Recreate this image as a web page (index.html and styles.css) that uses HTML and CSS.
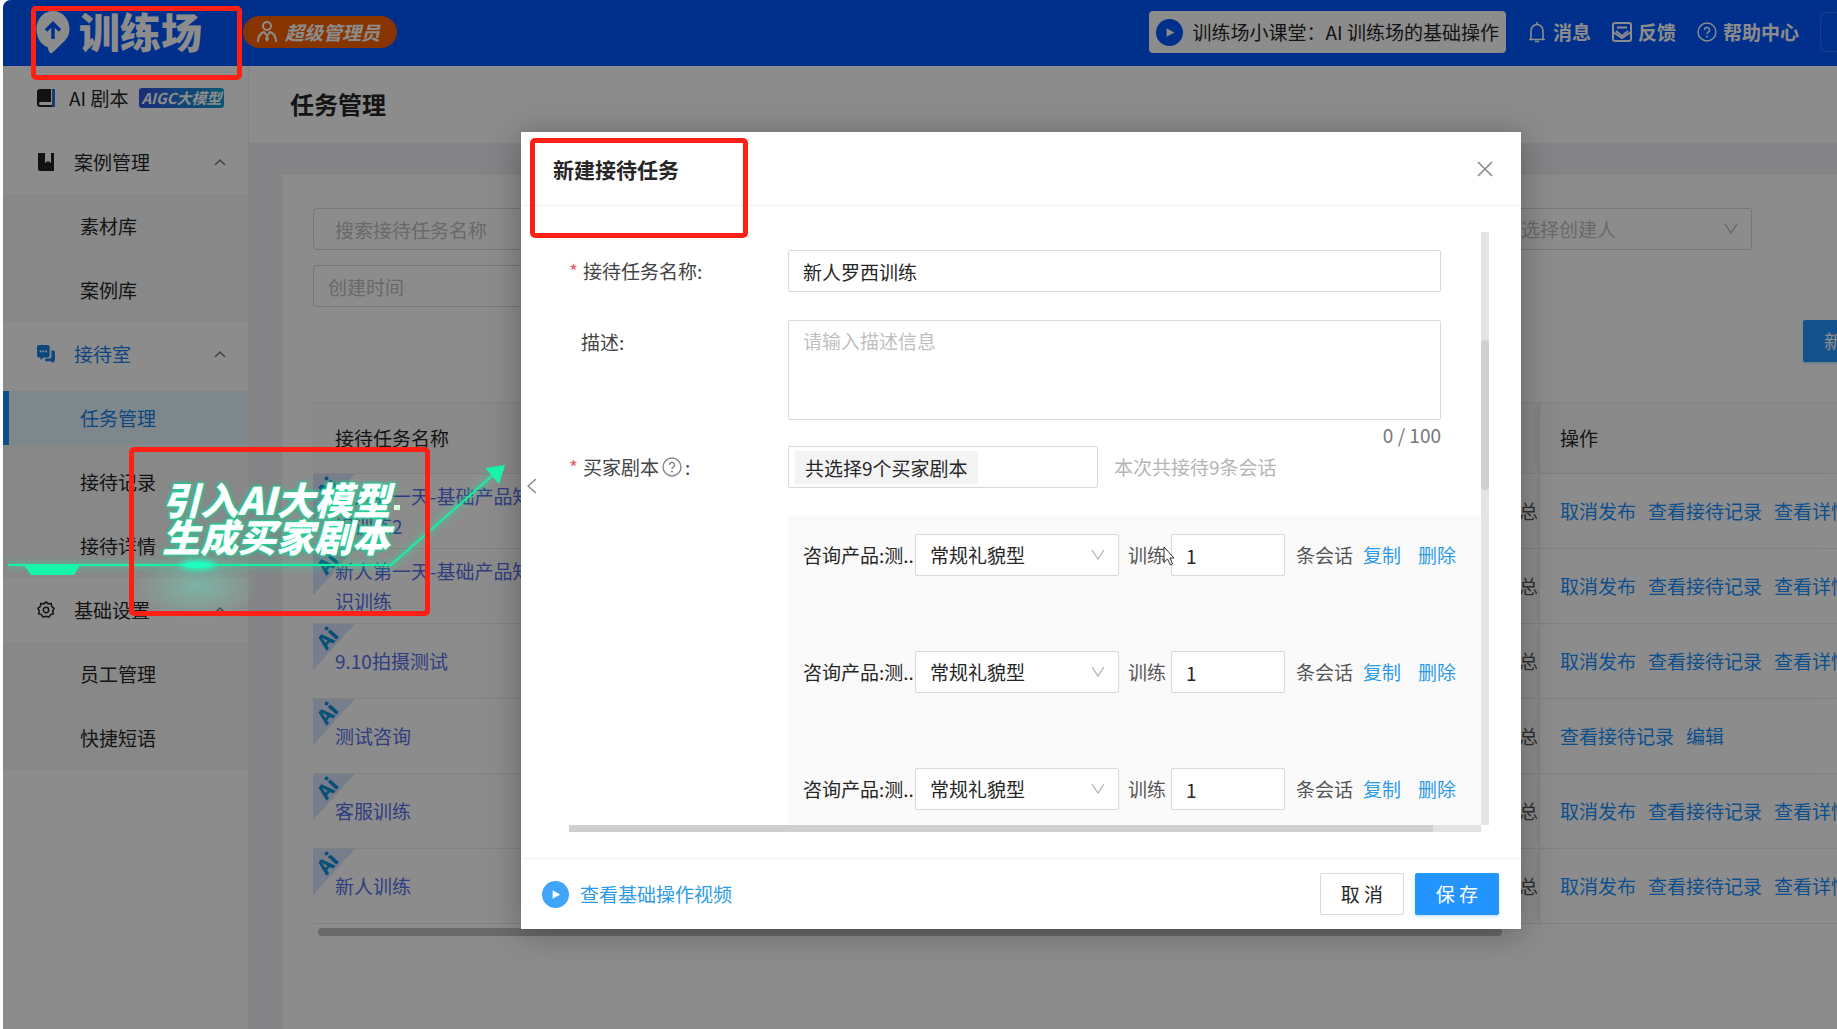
FILE: index.html
```html
<!DOCTYPE html>
<html lang="zh-CN">
<head>
<meta charset="utf-8">
<title>训练场 - 任务管理</title>
<link rel="stylesheet" href="styles.css">
</head>
<body>
<svg class="defs" aria-hidden="true">
  <symbol id="up" viewBox="0 0 12 8"><path d="M1 7l5-5 5 5" fill="none" stroke="currentColor" stroke-width="1.5"/></symbol>
  <symbol id="down" viewBox="0 0 14 12"><path d="M1 1l6 9 6-9" fill="none" stroke="currentColor" stroke-width="1.3"/></symbol>
  <symbol id="play" viewBox="0 0 28 28"><circle cx="14" cy="14" r="14" fill="currentColor"/><path d="M11 9.500l8 4.500-8 4.500z" fill="#fff"/></symbol>
  <symbol id="help" viewBox="0 0 20 20"><circle cx="10" cy="10" r="9" fill="none" stroke="currentColor" stroke-width="1.400"/><path d="M7.500 8a2.500 2.500 0 1 1 3.600 2.200c-.8.4-1.100.9-1.100 1.800" fill="none" stroke="currentColor" stroke-width="1.400"/><circle cx="10" cy="14.500" r="1" fill="currentColor"/></symbol>
</svg>
<div class="app">
  <header class="topbar">
    <div class="brand">
      <svg class="brand-pin" viewBox="0 0 34 43"><path d="M17 0C26.500 0 33.500 8 33.500 18c0 7-3.500 11-7 14-4 3-6 7-11.500 10.500-2-1-3-3-3-6C5 34 .5 27 .5 18 .5 8 7.500 0 17 0z" fill="#fff"/><path d="M17 28V13M10 19.500l7-7 7 7" fill="none" stroke="#0057ff" stroke-width="3.500"/></svg>
      <span class="brand-name">训练场</span>
    </div>
    <span class="role">
      <svg class="role-icon" viewBox="0 0 20 22"><g fill="none" stroke="#fff" stroke-width="2"><circle cx="10" cy="5" r="4"/><path d="M1 21c0-6 3-9 6-10l3 4 3-4c3 1 6 4 6 10"/></g><path d="M10 13l2 5-2 3-2-3z" fill="#fff"/></svg>
      超级管理员
    </span>
    <nav class="topnav">
      <a class="lesson" href="#"><svg class="play"><use href="#play"/></svg>训练场小课堂：AI 训练场的基础操作</a>
      <a href="#"><svg class="top-icon" viewBox="0 0 20 22"><path d="M2 18.500h16M4 18V10a6 6.500 0 0 1 12 0v8M10 1v3M8 20.500h4" fill="none" stroke="currentColor" stroke-width="1.600"/></svg>消息</a>
      <a href="#"><svg class="top-icon" viewBox="0 0 20 20"><path d="M1 12V3c0-1.500.5-2 2-2h14c1.500 0 2 .5 2 2v9M5 5.500h10M4 9l6 5 6-5" fill="none" stroke="currentColor" stroke-width="2"/><path d="M1 10v7c0 1.500.5 2 2 2h14c1.500 0 2-.5 2-2v-7l-9 6z" fill="none" stroke="currentColor" stroke-width="2"/></svg>反馈</a>
      <a href="#"><svg class="top-icon"><use href="#help"/></svg>帮助中心</a>
      <span class="account"></span>
    </nav>
  </header>
  <div class="shell">
    <aside class="sidebar">
      <a class="item first" href="#"><svg class="menu-icon" viewBox="0 0 18 20"><path d="M3 1h11v13H3.500a1.500 1.500 0 0 0 0 3H16v2H3c-2 0-3-1-3-3V4c0-2 1-3 3-3z" fill="#222"/><path d="M15 1h3v18h-3z" fill="#2f6fd0"/></svg>AI 剧本<span class="aigc">AIGC大模型</span></a>
      <a class="item" href="#"><svg class="menu-icon" viewBox="0 0 18 20"><path d="M1 1h7v10l3-2 3 2V1h3v18H3c-1 0-2-1-2-2z" fill="#222"/></svg>案例管理<svg class="caret"><use href="#up"/></svg></a>
      <div class="sub"><a href="#">素材库</a><a href="#">案例库</a></div>
      <a class="item open" href="#"><svg class="menu-icon" viewBox="0 0 20 20"><path d="M2 0h10c1 0 2 1 2 2v10c0 1-1 2-2 2H7l-3 3v-3H2c-1 0-2-1-2-2V2c0-1 1-2 2-2z" fill="#1880e8"/><path d="M16 6h2c1 0 2 1 2 2v8c0 1-1 2-1 2v2l-4-2H9v-3h6l1-1z" fill="#1880e8"/><path d="M3 6h2v2H3zM6 6h2v2H6zM9 6h2v2H9z" fill="#fff"/></svg>接待室<svg class="caret"><use href="#up"/></svg></a>
      <div class="sub"><a class="active" href="#">任务管理</a><a href="#">接待记录</a><a href="#">接待详情</a></div>
      <a class="item" href="#"><svg class="menu-icon" viewBox="0 0 20 20"><path d="M10 1l2.500 2.200 3.300-.3.600 3.300 2.600 2-1.500 2.800.7 3.200-3.200.9L13.300 18 10 17l-3.300 1L5 15.100l-3.200-.9.700-3.200L1 8.200l2.600-2 .6-3.300 3.300.3z" fill="none" stroke="currentColor" stroke-width="1.700"/><circle cx="10" cy="10" r="3" fill="none" stroke="currentColor" stroke-width="1.700"/></svg>基础设置<svg class="caret"><use href="#up"/></svg></a>
      <div class="sub"><a href="#">员工管理</a><a href="#">快捷短语</a></div>
    </aside>
    <main class="content">
      <h1 class="page-title">任务管理</h1>
      <section class="card">
        <div class="filters">
          <input class="field search" aria-label="搜索接待任务名称" placeholder="搜索接待任务名称">
          <div class="select creator"><select class="field" aria-label="选择创建人"><option>请选择创建人</option></select><svg class="arrow"><use href="#down"/></svg></div>
        </div>
        <input class="field date" aria-label="创建时间" placeholder="创建时间">
        <div class="toolbar"><button class="primary create">新建接待任务</button></div>
        <table class="tasks">
          <thead><tr><th class="name">接待任务名称</th><th></th><th class="ops">操作</th></tr></thead>
          <tbody>
            <tr><td class="name"><span class="ai"><b>Ai</b></span><a href="#">新人第一天-基础产品知识训练2</a></td><td class="mid">总</td><td class="ops"><a href="#">取消发布</a><a href="#">查看接待记录</a><a href="#">查看详情</a></td></tr>
            <tr><td class="name"><span class="ai"><b>Ai</b></span><a href="#">新人第一天-基础产品知识训练</a></td><td class="mid">总</td><td class="ops"><a href="#">取消发布</a><a href="#">查看接待记录</a><a href="#">查看详情</a></td></tr>
            <tr><td class="name"><span class="ai"><b>Ai</b></span><a href="#">9.10拍摄测试</a></td><td class="mid">总</td><td class="ops"><a href="#">取消发布</a><a href="#">查看接待记录</a><a href="#">查看详情</a></td></tr>
            <tr><td class="name"><span class="ai"><b>Ai</b></span><a href="#">测试咨询</a></td><td class="mid">总</td><td class="ops"><a href="#">查看接待记录</a><a href="#">编辑</a></td></tr>
            <tr><td class="name"><span class="ai"><b>Ai</b></span><a href="#">客服训练</a></td><td class="mid">总</td><td class="ops"><a href="#">取消发布</a><a href="#">查看接待记录</a><a href="#">查看详情</a></td></tr>
            <tr><td class="name"><span class="ai"><b>Ai</b></span><a href="#">新人训练</a></td><td class="mid">总</td><td class="ops"><a href="#">取消发布</a><a href="#">查看接待记录</a><a href="#">查看详情</a></td></tr>
          </tbody>
        </table>
        <div class="table-scroll"></div>
      </section>
    </main>
  </div>

  <div class="mask">
    <section class="modal" role="dialog" aria-labelledby="dialog-title">
      <header class="modal-head">
        <h2 id="dialog-title">新建接待任务</h2>
        <button class="icon-btn" aria-label="关闭"><svg class="close" viewBox="0 0 16 16"><path d="M1 1l14 14M15 1L1 15" stroke="currentColor" stroke-width="1.600"/></svg></button>
      </header>
      <div class="modal-body">
        <form class="form">
          <label class="label" for="task"><i>*</i>接待任务名称:</label>
          <input class="field" id="task" value="新人罗西训练">
          <label class="label top" for="desc">描述:</label>
          <div class="desc"><textarea class="field" id="desc" placeholder="请输入描述信息"></textarea><span class="count">0 / 100</span></div>
          <span class="label"><i>*</i>买家剧本<svg class="help"><use href="#help"/></svg>:</span>
          <div class="scripts"><button type="button" class="field picker"><span class="tag">共选择9个买家剧本</span></button><span class="hint">本次共接待9条会话</span></div>
          <div class="panel">
            <div class="line"><span class="product">咨询产品:测...</span><div class="select"><select class="field" aria-label="买家类型 1"><option>常规礼貌型</option></select><svg class="arrow"><use href="#down"/></svg></div><label for="n1">训练</label><input class="field num" id="n1" value="1"><span class="unit">条会话</span><a href="#">复制</a><a href="#">删除</a></div>
            <div class="line"><span class="product">咨询产品:测...</span><div class="select"><select class="field" aria-label="买家类型 2"><option>常规礼貌型</option></select><svg class="arrow"><use href="#down"/></svg></div><label for="n2">训练</label><input class="field num" id="n2" value="1"><span class="unit">条会话</span><a href="#">复制</a><a href="#">删除</a></div>
            <div class="line"><span class="product">咨询产品:测...</span><div class="select"><select class="field" aria-label="买家类型 3"><option>常规礼貌型</option></select><svg class="arrow"><use href="#down"/></svg></div><label for="n3">训练</label><input class="field num" id="n3" value="1"><span class="unit">条会话</span><a href="#">复制</a><a href="#">删除</a></div>
          </div>
        </form>
        <div class="vbar"><span></span></div>
        <div class="hbar"><span></span></div>
        <button class="icon-btn collapse" aria-label="收起"><svg class="chev" viewBox="0 0 10 16"><path d="M9 1L1 8l8 7" fill="none" stroke="currentColor" stroke-width="1.500"/></svg></button>
      </div>
      <footer class="modal-foot">
        <a href="#"><svg class="play"><use href="#play"/></svg>查看基础操作视频</a>
        <button class="field cancel">取 消</button>
        <button class="primary">保 存</button>
      </footer>
    </section>
  </div>

  <svg class="trail" viewBox="0 0 540 200" aria-hidden="true">
    <defs>
      <radialGradient id="halo"><stop offset="0" stop-color="#5fffd0" stop-opacity=".35"/><stop offset="1" stop-color="#5fffd0" stop-opacity="0"/></radialGradient>
      <filter id="soft" x="-50%" y="-200%" width="200%" height="500%"><feGaussianBlur stdDeviation="3"/></filter>
    </defs>
    <ellipse cx="195" cy="146" rx="62" ry="34" fill="url(#halo)"/>
    <path d="M5 125H388L490 35" fill="none" stroke="#16f5a8" stroke-width="6" opacity=".35" filter="url(#soft)"/>
    <path d="M5 125H388L490 35" fill="none" stroke="#16f0a4" stroke-width="2"/>
    <path d="M482 28l20-3-6 19z" fill="#16f5a8"/>
    <path d="M21 125h56l-6 10H28z" fill="#16f5a8"/>
    <ellipse cx="195" cy="125" rx="18" ry="5" fill="#1fffc0" filter="url(#soft)"/>
    <ellipse cx="195" cy="125" rx="14" ry="3" fill="#1fffc0"/>
    <path d="M391 65h6v5h-6z" fill="#d5ffd8"/>
  </svg>
  <div class="mark mark-brand"></div>
  <div class="mark mark-dialog"></div>
  <div class="mark mark-caption"><p>引入AI大模型</p><p>生成买家剧本</p></div>
  <svg class="cursor" viewBox="0 0 12 20" aria-hidden="true"><path d="M1 1v15l3.500-3 3 6 2-1-2.500-6H11z" fill="#fff" stroke="#333"/></svg>
</div>
</body>
</html>
```
FILE: styles.css
```css
* { box-sizing: border-box; }
body { margin: 0; padding-left: 3px; background: #fff; font: 19px/30px "Noto Sans CJK SC", sans-serif; color: #262626; }
a { color: #1890ff; text-decoration: none; }
h1, h2, p { margin: 0; }
button, input, select, textarea { font: inherit; color: inherit; }
button { cursor: pointer; }
svg { display: block; flex: none; }
.defs { position: absolute; width: 0; height: 0; }
.app { position: relative; min-height: 100vh; display: flex; flex-direction: column; overflow: hidden; border-top-left-radius: 8px; background: #f0f0f5; }

.topbar { height: 66px; padding: 0 0 2px 33px; display: flex; align-items: center; background: #0057ff; color: #fff; overflow: hidden; }
.brand { width: 207px; display: flex; align-items: center; gap: 9px; }
.brand-pin { width: 34px; height: 43px; }
.brand-name { padding-bottom: 4px; font-size: 41px; line-height: 56px; font-weight: 900; }
.role { height: 32px; padding: 0 17px 0 14px; display: flex; align-items: center; gap: 8px; border-radius: 16px; background: #f86000; font-style: italic; font-weight: 700; }
.role-icon { width: 20px; height: 22px; }
.topnav { margin-left: auto; display: flex; align-items: center; gap: 21px; font-weight: 700; white-space: nowrap; }
.topnav a { display: flex; align-items: center; gap: 6px; color: #fff; }
.topnav .lesson { height: 42px; padding: 0 7px; gap: 10px; border-radius: 4px; background: #fff; color: #262626; font-weight: 400; }
.topnav .lesson .play { color: #0057ff; }
.play { width: 27px; height: 27px; }
.top-icon { width: 20px; height: 22px; }
.account { width: 17px; height: 40px; border: 1px solid #2f76ff; border-right: 0; border-radius: 8px 0 0 8px; }

.shell { flex: 1; display: flex; }
.sidebar { width: 246px; flex: none; background: #fff; border-right: 1px solid #f0f0f0; }
.item { height: 64px; padding: 0 22px 0 34px; display: flex; align-items: center; gap: 19px; color: #262626; }
.item.first { gap: 14px; }
.item.open { color: #1880e8; }
.menu-icon { width: 18px; height: 20px; }
.caret { width: 12px; height: 8px; margin-left: auto; color: #777; }
.aigc { margin-left: -3px; padding: 0 2px; border-radius: 3px; background: linear-gradient(90deg, #3050e0, #10a0d0); color: #fff; font-size: 15px; line-height: 20px; font-style: italic; font-weight: 700; white-space: nowrap; }
.sub { background: #f7f7f7; }
.sub a { height: 64px; padding-left: 77px; display: flex; align-items: center; color: #262626; }
.sub .active { height: 54px; margin: 5px 0; padding-left: 71px; border-left: 6px solid #1890ff; background: #e6f7ff; color: #1880e8; }

.content { flex: 1; min-width: 0; display: flex; flex-direction: column; }
.page-title { height: 77px; padding-left: 41px; background: #fff; font-size: 24px; line-height: 75px; }
.card { flex: 1; margin: 32px 0 0 33px; padding: 33px 0 0 31px; background: #fff; }
.field { height: 42px; border: 1px solid #d9d9d9; border-radius: 2px; background: #fff; padding: 0 14px; outline: 0; }
.field::placeholder { color: #bfbfbf; opacity: 1; }
.filters { display: flex; justify-content: space-between; margin: 0 85px 15px 0; }
.search, .date { display: block; width: 300px; border-radius: 4px; }
.search { padding: 0 21px; }
.select { position: relative; }
.select select { width: 100%; appearance: none; }
.arrow { position: absolute; right: 14px; top: 15px; width: 14px; height: 12px; color: #b5b5b5; pointer-events: none; }
.creator { width: 265px; color: #bfbfbf; }
.toolbar { display: flex; justify-content: flex-end; margin: 13px -122px 40px 0; }
.primary { height: 42px; padding: 0 20px; border: 0; border-radius: 2px; background: #2494ff; color: #fff; box-shadow: 0 2px 3px rgb(36 148 255 / 25%); }
.create { width: 156px; }
.tasks { width: 100%; table-layout: fixed; border-collapse: separate; border-spacing: 0; }
.tasks th { height: 72px; padding: 0 20px; background: #fafafa; border: solid #ececec; border-width: 1px 0; text-align: left; font-weight: 400; }
.tasks td { height: 75px; padding: 0 20px; border-bottom: 1px solid #ececec; }
.tasks .name { position: relative; width: 235px; padding: 0 0 0 22px; }
.tasks td.name a { color: #5870ea; }
.tasks .mid { padding-right: 1px; text-align: right; color: #555; }
.tasks .ops { width: 298px; border-left: 1px solid #e8e8e8; white-space: nowrap; box-shadow: -6px 0 6px -4px rgb(0 0 0 / 10%); }
.ops a + a { margin-left: 12px; }
.ai { position: absolute; left: 0; top: 0; width: 42px; height: 46px; background: linear-gradient(132deg, #dbe4ff 50%, transparent 50%); color: #0d92d6; }
.ai b { display: block; width: 28px; font-size: 20px; line-height: 28px; font-weight: 900; text-align: center; transform: rotate(-48deg); }
.table-scroll { height: 8px; margin: 4px 335px 0 5px; border-radius: 4px; background: #c1c1c1; }

.mask { position: absolute; inset: 0; padding: 132px 0 0 518px; background: rgb(0 0 0 / 45%); }
.modal { width: 1000px; background: #fff; box-shadow: 0 4px 32px rgb(0 0 0 / 30%); }
.modal-head { height: 74px; padding: 0 28px 0 32px; display: flex; align-items: center; justify-content: space-between; border-bottom: 1px solid #f0f0f0; }
.modal-head h2 { font-size: 21px; }
.icon-btn { padding: 0; border: 0; background: none; color: #888; }
.close { width: 16px; height: 16px; }
.modal-body { position: relative; padding: 26px 32px 26px 48px; display: grid; grid-template-columns: 1fr 8px; }
.form { padding-top: 18px; display: grid; grid-template-columns: 219px 653px; align-items: start; }
.label { height: 36px; margin-top: 3px; display: flex; align-items: center; color: #444; }
.label i { width: 14px; color: #e0606a; font-style: normal; }
.label.top { padding-left: 12px; margin-top: 32px; }
.help { width: 20px; height: 20px; margin: 0 3px; color: #888; }
.desc { display: flex; flex-direction: column; margin-top: 28px; }
.desc .field { height: 100px; padding: 5px 14px; resize: none; }
.count { align-self: flex-end; height: 26px; color: #777; }
.scripts { display: flex; align-items: center; gap: 16px; }
.picker { width: 310px; padding: 0 6px; display: flex; align-items: center; }
.tag { height: 33px; padding: 0 10px; background: #f4f4f5; line-height: 33px; }
.hint { color: #b5b5b5; }
.panel { grid-column: 2; width: 693px; margin-top: 28px; padding: 18px 0 15px 15px; display: grid; gap: 75px; background: #fafafa; }
.line { display: flex; align-items: center; height: 42px; white-space: nowrap; }
.product { width: 112px; }
.line .select { width: 204px; margin-right: 9px; }
.num { width: 114px; margin: 0 11px 0 5px; }
.line a { margin-left: 10px; color: #2d9be8; }
.line a + a { margin-left: 17px; }
.line label, .unit { color: #555; }
.vbar { padding-top: 108px; background: #e4e4e4; }
.vbar span { display: block; height: 150px; border-radius: 4px; background: #d0d0d0; }
.hbar { height: 7px; background: #e2e2e2; }
.hbar span { display: block; width: 864px; height: 7px; background: #cfcfcf; }
.collapse { position: absolute; left: 6px; top: 272px; }
.chev { width: 10px; height: 16px; }
.modal-foot { height: 71px; padding: 0 22px 0 21px; display: flex; align-items: center; gap: 11px; border-top: 1px solid #f0f0f0; }
.modal-foot a { margin-right: auto; display: flex; align-items: center; gap: 11px; color: #2d9be8; }
.modal-foot .play { color: #40a4f8; }
.modal-foot button { width: 84px; }

.mark { position: absolute; border: 5px solid #ff2015; border-radius: 5px; }
.mark-brand { left: 28px; top: 6px; width: 211px; height: 74px; }
.mark-dialog { left: 527px; top: 138px; width: 218px; height: 100px; }
.mark-caption { left: 126px; top: 447px; width: 301px; height: 169px; padding: 28px 0 0 28px; color: #fff; font-size: 38px; line-height: 37px; font-weight: 900; font-style: italic; white-space: nowrap; text-shadow: 0 0 2px #16d898, 0 0 3px #16d898, 0 0 5px #16d898; }
.trail { position: absolute; left: 0; top: 440px; width: 540px; height: 200px; }
.cursor { position: absolute; left: 1160px; top: 546px; width: 12px; height: 20px; }
```
